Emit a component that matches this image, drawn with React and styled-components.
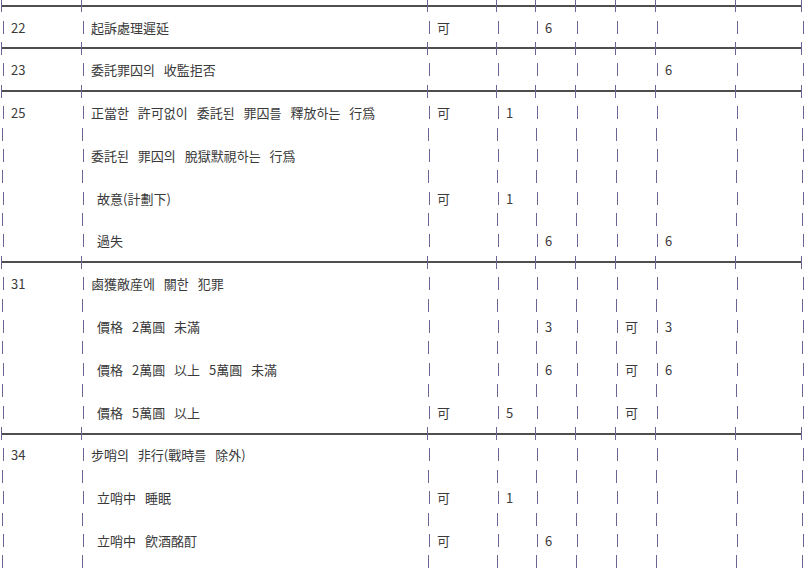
import React from "react";
import styled, { createGlobalStyle } from "styled-components";

const GlobalStyle = createGlobalStyle`
	html, body {
		margin: 0;
		padding: 0;
		background: #ffffff;
		overflow: hidden;
	}
`;

const COLS = "80px 346px 69px 39px 40px 40px 40px 80px 66px 6px";

const Sheet = styled.div`
	margin-top: -5px;
	margin-left: 1px;
	width: 806px;
	font-family: "Noto Sans CJK KR", "Liberation Sans", sans-serif;
	font-size: 13px;
	color: #3a3a3a;
`;

const Row = styled.div`
	display: grid;
	grid-template-columns: ${COLS};
	height: 21.4px;
	padding-left: ${(p) => (p.$rule ? "0" : p.$text ? "2px" : "1px")};
	background: ${(p) =>
		p.$rule
			? "linear-gradient(#4e4e4e, #4e4e4e) no-repeat 0 50% / 800px 2px"
			: "none"};
`;

const Cell = styled.div`
	display: flex;
	align-items: center;
	min-width: 0;
	white-space: nowrap;
`;

const Bar = styled.span`
	flex: none;
	width: 1px;
	height: 13px;
	background: #6f6396;
`;

const Label = styled.span`
	margin-left: ${(p) => (p.$indent ? "13px" : "7px")};
	word-spacing: 6px;
	line-height: 1;
`;

const lines = [
	{ rule: true },
	{ cells: ["22", "起訴處理遲延", "可", "", "6"] },
	{ rule: true },
	{ cells: ["23", "委託罪囚의 收監拒否", "", "", "", "", "", "6"] },
	{ rule: true },
	{ cells: ["25", "正當한 許可없이 委託된 罪囚를 釋放하는 行爲", "可", "1"] },
	{},
	{ cells: ["", "委託된 罪囚의 脫獄默視하는 行爲"] },
	{},
	{ cells: ["", "故意(計劃下)", "可", "1"], indent: true },
	{},
	{ cells: ["", "過失", "", "", "6", "", "", "6"], indent: true },
	{ rule: true },
	{ cells: ["31", "鹵獲敵産에 關한 犯罪"] },
	{},
	{ cells: ["", "價格 2萬圓 未滿", "", "", "3", "", "可", "3"], indent: true },
	{},
	{ cells: ["", "價格 2萬圓 以上 5萬圓 未滿", "", "", "6", "", "可", "6"], indent: true },
	{},
	{ cells: ["", "價格 5萬圓 以上", "可", "5", "", "", "可"], indent: true },
	{ rule: true },
	{ cells: ["34", "步哨의 非行(戰時를 除外)"] },
	{},
	{ cells: ["", "立哨中 睡眠", "可", "1"], indent: true },
	{},
	{ cells: ["", "立哨中 飮酒酩酊", "可", "", "6"], indent: true },
	{},
	{},
];

const App = () => {
	return (
		<>
			<GlobalStyle />
			<Sheet>
				{lines.map((line, i) => (
					<Row key={i} $rule={line.rule} $text={!!line.cells}>
						{Array.from({ length: 10 }).map((_, c) => {
							const text = line.cells ? line.cells[c] : "";
							return (
								<Cell key={c}>
									<Bar />
									{text ? (
										<Label $indent={line.indent && c === 1}>{text}</Label>
									) : null}
								</Cell>
							);
						})}
					</Row>
				))}
			</Sheet>
		</>
	);
};

export default App;
